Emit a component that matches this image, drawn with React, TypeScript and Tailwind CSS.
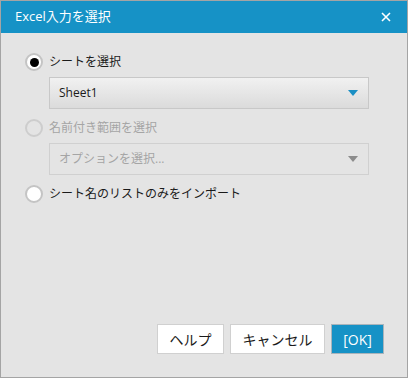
const font = "font-['Open_Sans','Noto_Sans_CJK_JP',sans-serif]";

const Radio = ({ state }: { state: "on" | "off" | "disabled" }) => {
  if (state === "on") {
    return (
      <span className="flex h-[18px] w-[18px] items-center justify-center rounded-full border-2 border-[#c4c4c4] bg-white">
        <span className="h-[9px] w-[9px] rounded-full bg-black" />
      </span>
    );
  }
  if (state === "disabled") {
    return <span className="h-[18px] w-[18px] rounded-full border-2 border-[#cdcdcd]" />;
  }
  return <span className="h-[18px] w-[18px] rounded-full border-2 border-[#c4c4c4] bg-white" />;
};

const Arrow = ({ color }: { color: string }) => (
  <svg width="10" height="6" viewBox="0 0 10 6">
    <path d="M0 0H10L5 6Z" fill={color} />
  </svg>
);

const App = () => {
  return (
    <div
      className={`flex h-[378px] w-[408px] flex-col border border-[#a4a4a4] bg-[#e4e4e4] text-[12px] ${font}`}
    >
      <div className="flex h-[32px] items-center justify-between bg-[#1692c6] pl-[14px] pr-[16px] text-white">
        <span className="text-[13px]">Excel入力を選択</span>
        <svg width="10" height="10" viewBox="0 0 10 10">
          <path d="M1 1L9 9M9 1L1 9" stroke="white" strokeWidth="1.6" />
        </svg>
      </div>

      <div className="flex flex-1 flex-col pl-[24px] pr-[38px] pt-[19px]">
        <div className="flex h-[20px] items-center gap-[6px] text-[#1a1a1a]">
          <Radio state="on" />
          <span>シートを選択</span>
        </div>
        <div className="ml-[24px] mt-[5px] flex h-[32px] items-center justify-between border border-[#c8c8c8] bg-gradient-to-b from-[#f1f1f1] to-[#dbdbdb] pl-[9px] pr-[10px] text-[#1a1a1a]">
          <span>Sheet1</span>
          <Arrow color="#1a8fc4" />
        </div>

        <div className="mt-[9px] flex h-[20px] items-center gap-[6px] text-[#a5a5a5]">
          <Radio state="disabled" />
          <span>名前付き範囲を選択</span>
        </div>
        <div className="ml-[24px] mt-[5px] flex h-[32px] items-center justify-between border border-[#d0d0d0] pl-[9px] pr-[10px] text-[#a5a5a5]">
          <span>オプションを選択...</span>
          <Arrow color="#8c8c8c" />
        </div>

        <div className="mt-[9px] flex h-[20px] items-center gap-[6px] text-[#1a1a1a]">
          <Radio state="off" />
          <span>シート名のリストのみをインポート</span>
        </div>
      </div>

      <div className="flex justify-end gap-[6px] pb-[23px] pr-[23px] text-[14px]">
        <button className="h-[30px] w-[67px] border border-[#d0d0d0] bg-white text-[#1a1a1a]">
          ヘルプ
        </button>
        <button className="h-[30px] w-[95px] border border-[#d0d0d0] bg-white text-[#1a1a1a]">
          キャンセル
        </button>
        <button className="h-[30px] w-[53px] border border-[#a9b4bb] bg-[#1692c6] text-white">
          [OK]
        </button>
      </div>
    </div>
  );
};

export default App;
